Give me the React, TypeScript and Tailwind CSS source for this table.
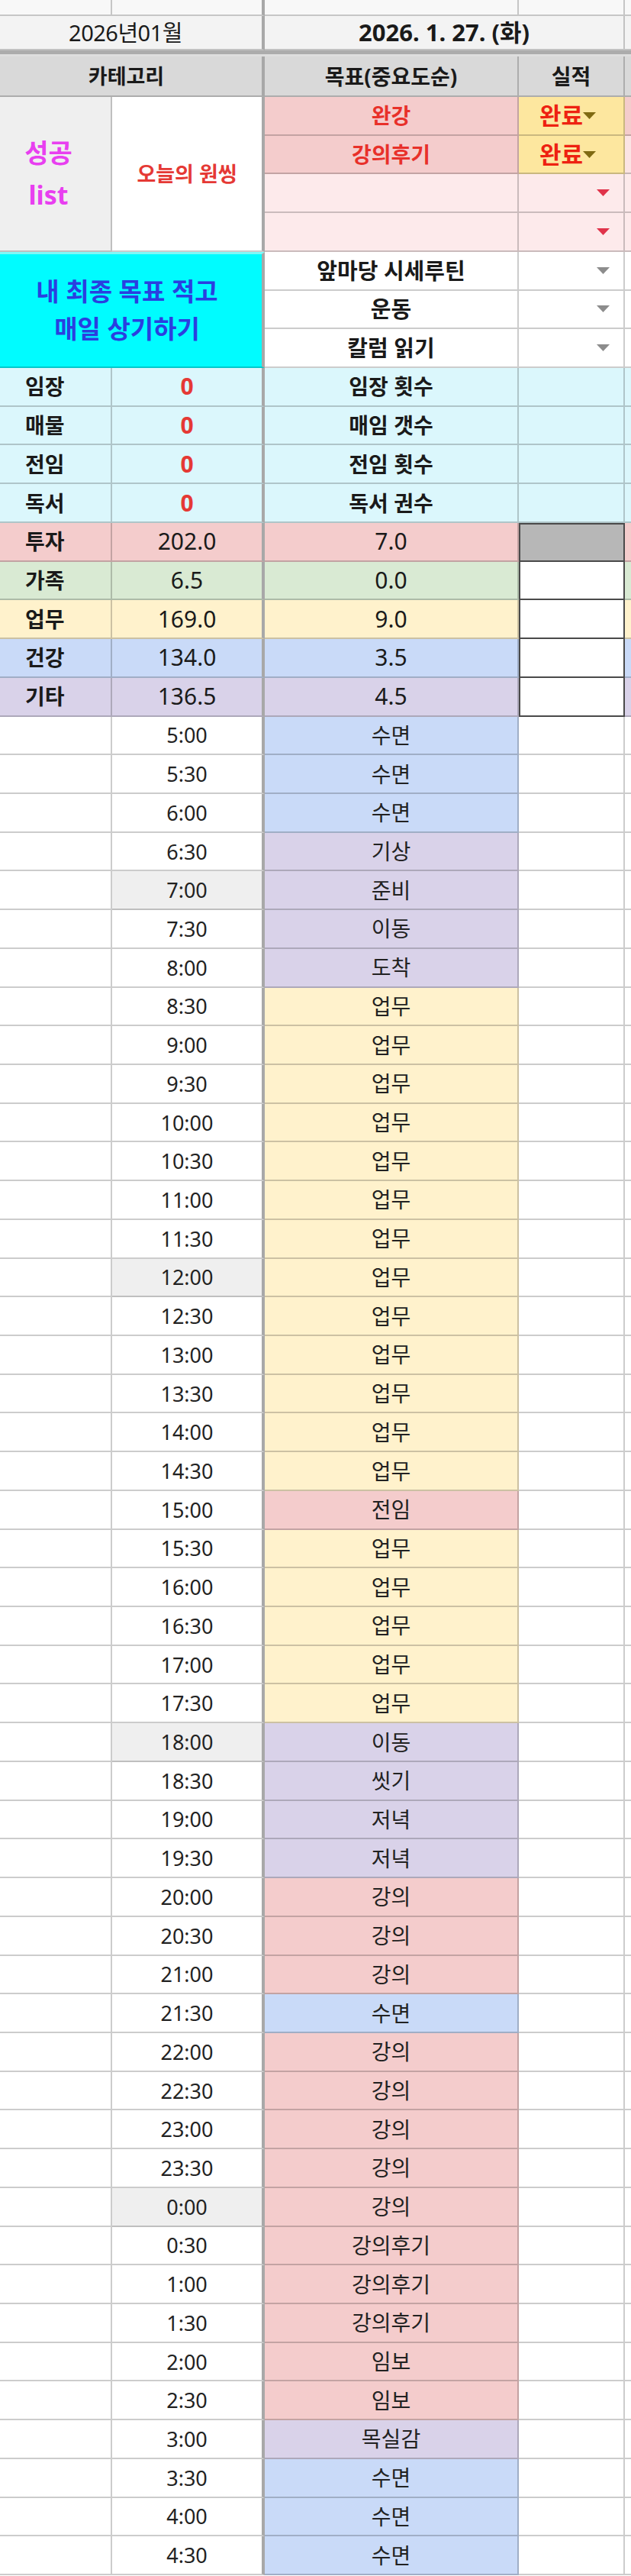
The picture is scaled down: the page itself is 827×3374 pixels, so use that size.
import React from "react";

type Tone = "blue" | "purple" | "yellow" | "pink";
const TONE: Record<Tone, string> = {
  blue: "bg-[#c9daf8]",
  purple: "bg-[#d9d2e9]",
  yellow: "bg-[#fff2cc]",
  pink: "bg-[#f4cccc]",
};

const times: [string, string, Tone, boolean][] = [
  ["5:00", "수면", "blue", false],
  ["5:30", "수면", "blue", false],
  ["6:00", "수면", "blue", false],
  ["6:30", "기상", "purple", false],
  ["7:00", "준비", "purple", true],
  ["7:30", "이동", "purple", false],
  ["8:00", "도착", "purple", false],
  ["8:30", "업무", "yellow", false],
  ["9:00", "업무", "yellow", false],
  ["9:30", "업무", "yellow", false],
  ["10:00", "업무", "yellow", false],
  ["10:30", "업무", "yellow", false],
  ["11:00", "업무", "yellow", false],
  ["11:30", "업무", "yellow", false],
  ["12:00", "업무", "yellow", true],
  ["12:30", "업무", "yellow", false],
  ["13:00", "업무", "yellow", false],
  ["13:30", "업무", "yellow", false],
  ["14:00", "업무", "yellow", false],
  ["14:30", "업무", "yellow", false],
  ["15:00", "전임", "pink", false],
  ["15:30", "업무", "yellow", false],
  ["16:00", "업무", "yellow", false],
  ["16:30", "업무", "yellow", false],
  ["17:00", "업무", "yellow", false],
  ["17:30", "업무", "yellow", false],
  ["18:00", "이동", "purple", true],
  ["18:30", "씻기", "purple", false],
  ["19:00", "저녁", "purple", false],
  ["19:30", "저녁", "purple", false],
  ["20:00", "강의", "pink", false],
  ["20:30", "강의", "pink", false],
  ["21:00", "강의", "pink", false],
  ["21:30", "수면", "blue", false],
  ["22:00", "강의", "pink", false],
  ["22:30", "강의", "pink", false],
  ["23:00", "강의", "pink", false],
  ["23:30", "강의", "pink", false],
  ["0:00", "강의", "pink", true],
  ["0:30", "강의후기", "pink", false],
  ["1:00", "강의후기", "pink", false],
  ["1:30", "강의후기", "pink", false],
  ["2:00", "임보", "pink", false],
  ["2:30", "임보", "pink", false],
  ["3:00", "목실감", "purple", false],
  ["3:30", "수면", "blue", false],
  ["4:00", "수면", "blue", false],
  ["4:30", "수면", "blue", false],
];

const cats: [string, string, string, string, boolean][] = [
  ["투자", "202.0", "7.0", "bg-[#f4cccc]", true],
  ["가족", "6.5", "0.0", "bg-[#d9ead3]", false],
  ["업무", "169.0", "9.0", "bg-[#fff2cc]", false],
  ["건강", "134.0", "3.5", "bg-[#c9daf8]", false],
  ["기타", "136.5", "4.5", "bg-[#d9d2e9]", false],
];

const stats: [string, string][] = [
  ["임장", "임장 횟수"],
  ["매물", "매임 갯수"],
  ["전임", "전임 횟수"],
  ["독서", "독서 권수"],
];

function Tri({ color }: { color: string }) {
  return (
    <svg width="17" height="9" viewBox="0 0 17 9" className="shrink-0">
      <polygon points="0,0 17,0 8.5,9" fill={color} />
    </svg>
  );
}

const cell = "flex items-center justify-center border-b-2 border-r-2 border-black/20 min-w-0";
const cellB = "flex items-center justify-center border-b-2 border-r-4 border-b-black/20 border-r-[#a8a8a8] min-w-0";
const cellE = "border-b-2 border-black/20";

export default function App() {
  return (
    <div className="w-[827px] bg-white font-['Noto_Sans','Noto_Sans_CJK_KR',sans-serif] text-[#1a1a1a] leading-none">
      <div className="grid grid-cols-[147px_200px_333px_139px_8px] grid-rows-[21px_45px_8px_53px_repeat(64,50.72px)]">
        {/* row 0 */}
        <div className={`${cell} bg-[#f8f8f8]`} />
        <div className={`${cellB} bg-[#f8f8f8]`} />
        <div className={`${cell} bg-[#f8f8f8]`} />
        <div className={`${cell} bg-[#f8f8f8]`} />
        <div className={`${cellE} bg-[#f8f8f8]`} />
        {/* row 1 */}
        <div className={`${cellB} col-span-2 bg-[#f3f3f3] text-[29px] pr-[14px] tracking-[-0.5px]`}>2026년01월</div>
        <div className={`${cell} col-span-2 bg-[#f3f3f3] text-[31px] font-bold`}>2026. 1. 27. (화)</div>
        <div className={`${cellE} bg-[#f3f3f3]`} />
        {/* separator */}
        <div className="col-span-5 flex flex-col">
          <div className="h-[5px] bg-[#acacac]" />
          <div className="h-[3px] bg-[#dedede]" />
        </div>
        {/* header */}
        <div className={`${cellB} col-span-2 bg-[#d9d9d9] text-[27px] font-bold pr-[12px]`}>카테고리</div>
        <div className={`${cell} bg-[#d9d9d9] text-[28px] font-bold`}>목표(중요도순)</div>
        <div className={`${cell} bg-[#d9d9d9] text-[28px] font-bold`}>실적</div>
        <div className={`${cellE} bg-[#d9d9d9]`} />

        {/* goal rows */}
        <div className={`${cell} row-span-4 bg-[#efefef] flex-col gap-[21px] pr-[18px] text-[34px] font-bold text-[#e83ff0]`}>
          <span>성공</span>
          <span>list</span>
        </div>
        <div className={`${cellB} row-span-4 bg-white text-[27px] font-bold text-[#e53935]`}>오늘의 원씽</div>
        <div className={`${cell} bg-[#f4cccc] text-[28px] font-bold text-[#e8302a]`}>완강</div>
        <div className={`${cell} bg-[#fde79f] justify-between pl-[9px] pr-[18px] text-[31px] font-bold text-[#ee2211]`}>
          <span>완료</span>
          <Tri color="#7f6a12" />
        </div>
        <div className={`${cellE} bg-[#f4cccc]`} />

        <div className={`${cell} bg-[#f4cccc] text-[28px] font-bold text-[#e8302a]`}>강의후기</div>
        <div className={`${cell} bg-[#fde79f] justify-between pl-[9px] pr-[18px] text-[31px] font-bold text-[#ee2211]`}>
          <span>완료</span>
          <Tri color="#7f6a12" />
        </div>
        <div className={`${cellE} bg-[#fbe4e4]`} />

        {[0, 1].map((i) => (
          <React.Fragment key={i}>
            <div className={`${cell} bg-[#fdeaeb]`} />
            <div className={`${cell} bg-[#fdeaeb] justify-end pr-[18px]`}>
              <Tri color="#e0334a" />
            </div>
            <div className={`${cellE} bg-[#fdeaeb]`} />
          </React.Fragment>
        ))}

        {/* cyan */}
        <div className="col-span-2 row-span-3 flex flex-col items-center justify-center gap-[16px] pr-[10px] bg-[#00fcff] border-t-[3px] border-[#7ff7f7] border-b-2 border-b-black/20 border-r-4 border-r-[#a8a8a8] text-[33px] font-bold text-[#2a3fe0]">
          <span>내 최종 목표 적고</span>
          <span>매일 상기하기</span>
        </div>
        {["앞마당 시세루틴", "운동", "칼럼 읽기"].map((t) => (
          <React.Fragment key={t}>
            <div className={`${cell} bg-white text-[29px] font-bold`}>{t}</div>
            <div className={`${cell} bg-white justify-end pr-[18px]`}>
              <Tri color="#8c8c8c" />
            </div>
            <div className={`${cellE} bg-white`} />
          </React.Fragment>
        ))}

        {/* stats */}
        {stats.map(([a, c]) => (
          <React.Fragment key={a}>
            <div className={`${cell} bg-[#dbf7fc] justify-start pl-[33px] text-[28px] font-bold`}>{a}</div>
            <div className={`${cellB} bg-[#dbf7fc] text-[30px] font-bold text-[#e53935]`}>0</div>
            <div className={`${cell} bg-[#dbf7fc] text-[28px] font-bold`}>{c}</div>
            <div className={`${cell} bg-[#dbf7fc]`} />
            <div className={`${cellE} bg-[#dbf7fc]`} />
          </React.Fragment>
        ))}

        {/* categories */}
        {cats.map(([a, b, c, bg, first]) => (
          <React.Fragment key={a}>
            <div className={`${cell} ${bg} justify-start pl-[33px] text-[28px] font-bold`}>{a}</div>
            <div className={`${cellB} ${bg} text-[30px]`}>{b}</div>
            <div className={`${cell} ${bg} text-[30px] border-r-0`}>{c}</div>
            <div
              className={
                first
                  ? "bg-[#b7b7b7] border-2 border-[#4a4a4a]"
                  : "bg-white border-x-2 border-b-2 border-[#4a4a4a]"
              }
            />
            <div className={`${cellE} ${bg}`} />
          </React.Fragment>
        ))}

        {/* time rows */}
        {times.map(([t, act, tone, gray]) => (
          <React.Fragment key={t}>
            <div className={`${cell} bg-white`} />
            <div className={`${cellB} ${gray ? "bg-[#efefef]" : "bg-white"} text-[27px] text-[#222]`}>{t}</div>
            <div className={`${cell} ${TONE[tone]} text-[28px] text-[#222]`}>{act}</div>
            <div className={`${cell} bg-white`} />
            <div className={`${cellE} bg-white`} />
          </React.Fragment>
        ))}
      </div>
    </div>
  );
}
